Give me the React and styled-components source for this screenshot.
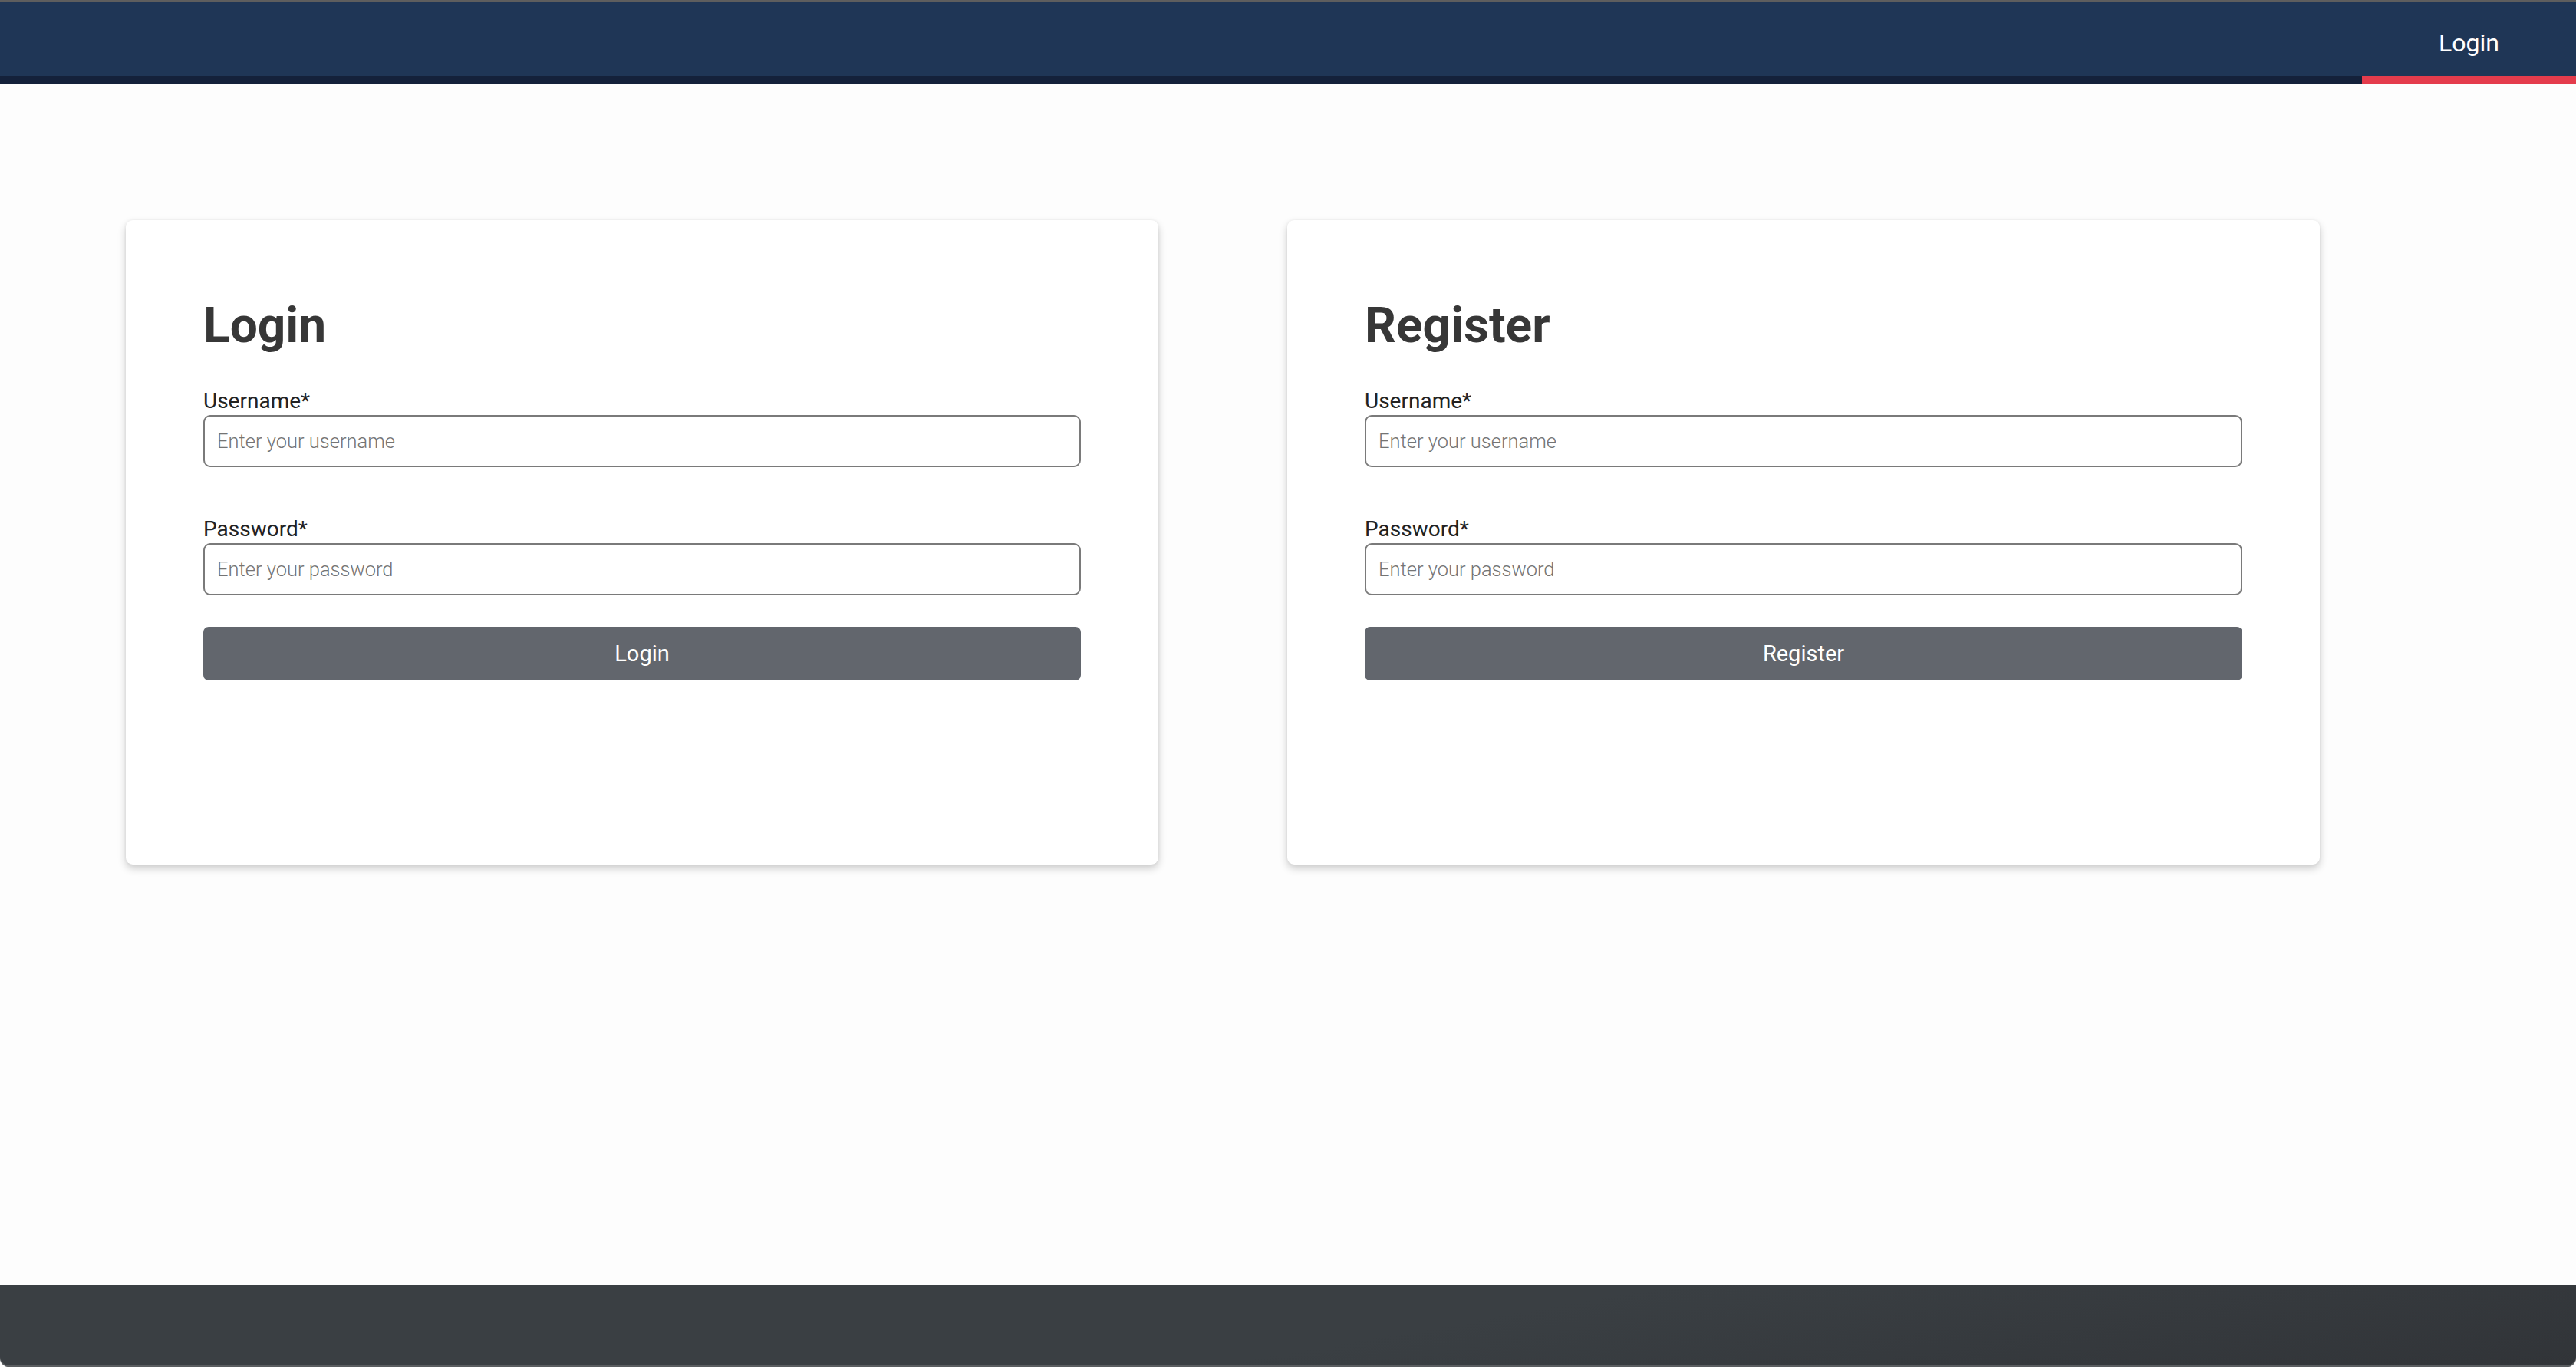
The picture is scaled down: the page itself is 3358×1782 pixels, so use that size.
import React from "react";
import styled, { createGlobalStyle } from "styled-components";

const GlobalStyle = createGlobalStyle`
  html, body {
    margin: 0;
    padding: 0;
    background: #ffffff;
  }
  body {
    font-family: Roboto, "Liberation Sans", Arial, sans-serif;
  }
  * { box-sizing: border-box; }
`;

const Page = styled.div`
  min-height: 100vh;
  display: flex;
  flex-direction: column;
  background: #fdfdfd;
`;

const NavBar = styled.header`
  display: flex;
  justify-content: flex-end;
  height: 109px;
  border-top: 2px solid #5e5e5e;
  background: #1f3656;
  box-shadow: inset 0 -10px 0 #14213a;
`;

const NavItem = styled.a`
  display: flex;
  align-items: center;
  justify-content: center;
  width: 279px;
  height: 100%;
  color: #ffffff;
  font-size: 32px;
  font-weight: 400;
  text-decoration: none;
  box-shadow: ${(p) => (p.$active ? "inset 0 -10px 0 #e43c4c" : "none")};
`;

const Main = styled.main`
  flex: 1;
  display: flex;
  align-items: flex-start;
  gap: 168px;
  padding: 178px 0 0 164px;
`;

const Card = styled.section`
  width: 1346px;
  height: 840px;
  padding: 100px 101px;
  background: #ffffff;
  border-radius: 9px;
  box-shadow: 0 5px 11px rgba(0, 0, 0, 0.2), 0 0 4px rgba(0, 0, 0, 0.06);
`;

const Title = styled.h1`
  margin: 0 0 44px;
  font-size: 64px;
  font-weight: 700;
  line-height: normal;
  color: #373737;
`;

const Form = styled.form`
  display: flex;
  flex-direction: column;
`;

const Field = styled.div`
  display: flex;
  flex-direction: column;
  gap: 2px;
  margin-bottom: ${(p) => (p.$last ? "41px" : "64px")};
`;

const Label = styled.label`
  font-size: 28px;
  line-height: normal;
  color: #222222;
`;

const Input = styled.input`
  height: 68px;
  padding: 0 16px;
  border: 2px solid #7a7a7a;
  border-radius: 9px;
  background: #ffffff;
  font-family: Roboto, "Liberation Sans", Arial, sans-serif;
  font-size: 25.5px;
  font-weight: 300;
  color: #333;
  outline: none;
  &::placeholder {
    color: #747474;
    font-weight: 300;
  }
`;

const Button = styled.button`
  height: 70px;
  border: none;
  border-radius: 7px;
  background: #62666d;
  color: #ffffff;
  font-family: Roboto, "Liberation Sans", Arial, sans-serif;
  font-size: 29px;
  font-weight: 400;
  cursor: pointer;
`;

const Footer = styled.footer`
  height: 107px;
  background: linear-gradient(170deg, #3a3f43 55%, #313438 100%);
  border-radius: 0 0 12px 12px;
  box-shadow: inset 0 -2px 0 #5a5d60;
`;

function AuthCard({ title, action }) {
  return (
    <Card>
      <Title>{title}</Title>
      <Form onSubmit={(e) => e.preventDefault()}>
        <Field>
          <Label>Username*</Label>
          <Input type="text" placeholder="Enter your username" />
        </Field>
        <Field $last>
          <Label>Password*</Label>
          <Input type="password" placeholder="Enter your password" />
        </Field>
        <Button type="submit">{action}</Button>
      </Form>
    </Card>
  );
}

export default function App() {
  return (
    <>
      <GlobalStyle />
      <Page>
        <NavBar>
          <NavItem href="#" $active>
            Login
          </NavItem>
        </NavBar>
        <Main>
          <AuthCard title="Login" action="Login" />
          <AuthCard title="Register" action="Register" />
        </Main>
        <Footer />
      </Page>
    </>
  );
}
